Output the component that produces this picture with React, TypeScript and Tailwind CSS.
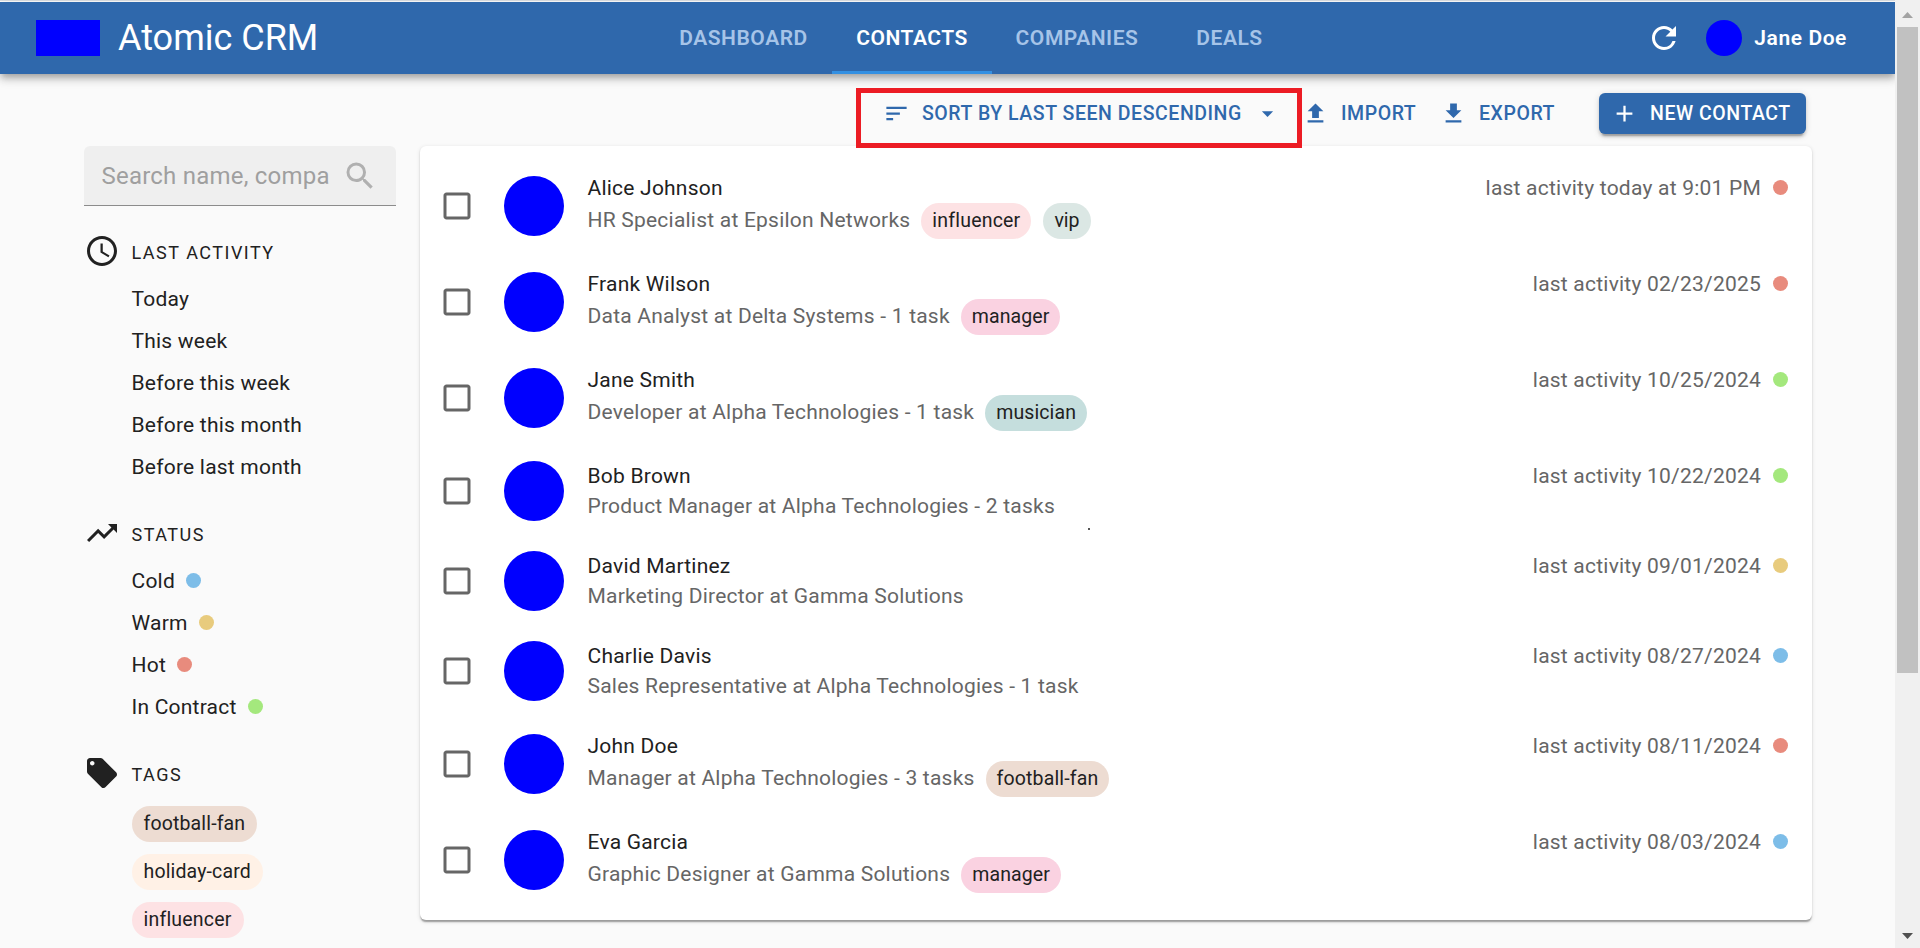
import type { ReactNode } from "react";
import {
  MdAccessTime,
  MdAdd,
  MdArrowDropDown,
  MdCheckBoxOutlineBlank,
  MdDownload,
  MdLocalOffer,
  MdRefresh,
  MdSearch,
  MdSort,
  MdTrendingUp,
  MdUpload,
} from "react-icons/md";

type Status = "cold" | "warm" | "hot" | "contract";

const statusColor: Record<Status, string> = {
  cold: "bg-[#7dbde8]",
  warm: "bg-[#e8cb7d]",
  hot: "bg-[#e88b7d]",
  contract: "bg-[#a4e87d]",
};

const tagStyle: Record<string, string> = {
  "football-fan": "bg-[#eddcd2] tracking-[0.15px]",
  "holiday-card": "bg-[#fff1e6] tracking-[0.15px]",
  influencer: "bg-[#fde2e4] tracking-[0.2px]",
  manager: "bg-[#fad2e1] tracking-[0.1px]",
  musician: "bg-[#c5dedd] tracking-[0.1px]",
  vip: "bg-[#dbe7e4] tracking-normal",
};

interface Contact {
  name: string;
  detail: string;
  activity: string;
  status: Status;
  tags: string[];
}

const contacts: Contact[] = [
  { name: "Alice Johnson", detail: "HR Specialist at Epsilon Networks", activity: "today at 9:01 PM", status: "hot", tags: ["influencer", "vip"] },
  { name: "Frank Wilson", detail: "Data Analyst at Delta Systems - 1 task", activity: "02/23/2025", status: "hot", tags: ["manager"] },
  { name: "Jane Smith", detail: "Developer at Alpha Technologies - 1 task", activity: "10/25/2024", status: "contract", tags: ["musician"] },
  { name: "Bob Brown", detail: "Product Manager at Alpha Technologies - 2 tasks", activity: "10/22/2024", status: "contract", tags: [] },
  { name: "David Martinez", detail: "Marketing Director at Gamma Solutions", activity: "09/01/2024", status: "warm", tags: [] },
  { name: "Charlie Davis", detail: "Sales Representative at Alpha Technologies - 1 task", activity: "08/27/2024", status: "cold", tags: [] },
  { name: "John Doe", detail: "Manager at Alpha Technologies - 3 tasks", activity: "08/11/2024", status: "hot", tags: ["football-fan"] },
  { name: "Eva Garcia", detail: "Graphic Designer at Gamma Solutions", activity: "08/03/2024", status: "cold", tags: ["manager"] },
];

const periods = ["Today", "This week", "Before this week", "Before this month", "Before last month"];

const statuses: { label: string; status: Status }[] = [
  { label: "Cold", status: "cold" },
  { label: "Warm", status: "warm" },
  { label: "Hot", status: "hot" },
  { label: "In Contract", status: "contract" },
];

function Dot({ status, className }: { status: Status; className: string }) {
  return <span className={`size-[15px] shrink-0 rounded-full ${className} ${statusColor[status]}`} />;
}

function Header() {
  const tab = "flex h-full items-center justify-center border-b-[3px] pt-[5px] text-[21px] font-semibold tracking-[0.53px]";
  return (
    <header className="relative z-10 flex h-[72px] items-center bg-[#2f68ac] text-white shadow-[0_3px_6px_-1.5px_rgba(0,0,0,0.2),0_6px_7.5px_rgba(0,0,0,0.14),0_1.5px_15px_rgba(0,0,0,0.12)]">
      <div className="flex w-[655px] items-center pl-9">
        <span className="h-9 w-16 bg-[#0000ff]" />
        <h1 className="ml-[18px] text-4xl leading-none">Atomic CRM</h1>
      </div>
      <nav className="flex h-full">
        <a className={`${tab} w-[177px] border-transparent text-[#a6c4e8]`}>DASHBOARD</a>
        <a className={`${tab} w-[160px] border-[#3490e2]`}>CONTACTS</a>
        <a className={`${tab} w-[170px] border-transparent text-[#a6c4e8]`}>COMPANIES</a>
        <a className={`${tab} w-[135px] border-transparent text-[#a6c4e8]`}>DEALS</a>
      </nav>
      <div className="ml-auto flex items-center pr-12">
        <MdRefresh className="size-9" />
        <span className="ml-6 size-9 rounded-full bg-[#0000ff]" />
        <span className="ml-3 pt-px text-[21px] font-semibold tracking-[0.58px]">Jane Doe</span>
      </div>
    </header>
  );
}

function Toolbar() {
  const text = "ml-3 text-[19.5px] font-medium tracking-[0.55px] leading-[27px]";
  return (
    <div className="flex h-[72px] items-start pl-[856px] text-[#2f68ac]">
      <div className="relative z-10 mt-[14px] flex h-[60px] w-[446px] shrink-0 items-start border-[5px] border-[#ec1c24] pl-[22px] pt-[7px]">
        <MdSort className="size-[27px]" />
        <span className={text}>SORT BY LAST SEEN DESCENDING</span>
        <MdArrowDropDown className="ml-auto mr-4 size-[27px]" />
      </div>
      <div className="mt-[26px] flex w-[138px] items-center">
        <MdUpload className="size-[27px]" />
        <span className={text}>IMPORT</span>
      </div>
      <div className="mt-[26px] flex w-[159px] items-center">
        <MdDownload className="size-[27px]" />
        <span className={text}>EXPORT</span>
      </div>
      <button className="mt-[19px] flex h-[41px] w-[207px] items-center rounded-md bg-[#2f68ac] pl-3 text-white shadow-[0_4.5px_1.5px_-3px_rgba(0,0,0,0.2),0_3px_3px_rgba(0,0,0,0.14),0_1.5px_7.5px_rgba(0,0,0,0.12)]">
        <MdAdd className="size-[27px]" />
        <span className={text}>NEW CONTACT</span>
      </button>
    </div>
  );
}

function Section({ icon, title, children }: { icon: ReactNode; title: string; children: ReactNode }) {
  return (
    <section className="mb-7">
      <div className="mb-2 flex h-9 items-center">
        {icon}
        <h2 className="ml-[11.5px] pt-[3px] text-[18px] tracking-[1.5px]">{title}</h2>
      </div>
      <div className="pl-[47.5px]">{children}</div>
    </section>
  );
}

function Sidebar() {
  const item = "flex h-[42px] items-center text-[21px] tracking-[0.22px]";
  return (
    <aside className="w-[312px] shrink-0 text-[#212121]">
      <div className="mb-[27px] flex h-[60px] items-center rounded-t-md border-b border-[#8c8c8c] bg-[#efefef] pl-[17.5px]">
        <span className="w-[228.5px] overflow-hidden whitespace-nowrap text-2xl tracking-[0.22px] text-[#9f9f9f]">Search name, compa</span>
        <MdSearch className="ml-3 size-9 shrink-0 text-[#b0b0b0]" />
      </div>
      <Section icon={<MdAccessTime className="size-9" />} title="LAST ACTIVITY">
        {periods.map((p) => (
          <div key={p} className={item}>
            <span className="pt-[3px]">{p}</span>
          </div>
        ))}
      </Section>
      <Section icon={<MdTrendingUp className="size-9" />} title="STATUS">
        {statuses.map((s) => (
          <div key={s.label} className={item}>
            <span className="pt-[3px]">{s.label}</span>
            <Dot status={s.status} className="ml-[11px] mt-px" />
          </div>
        ))}
      </Section>
      <Section icon={<MdLocalOffer className="size-9" />} title="TAGS">
        <div className="flex flex-col items-start gap-3 pt-[7px]">
          {["football-fan", "holiday-card", "influencer"].map((t) => (
            <span key={t} className={`flex h-9 items-center rounded-full px-3 text-[19.5px] ${tagStyle[t]}`}>{t}</span>
          ))}
        </div>
      </Section>
    </aside>
  );
}

function ContactRow({ contact }: { contact: Contact }) {
  const { name, detail, activity, status, tags } = contact;
  return (
    <li className="flex items-center py-[15px] pl-[19px] pr-6 text-[21px] leading-[30px] tracking-[0.22px]">
      <MdCheckBoxOutlineBlank className="size-9 text-[#666]" />
      <span className="ml-[29px] size-[60px] rounded-full bg-[#0000ff]" />
      <div className="ml-[23.5px] flex-1">
        <div className="text-[#212121]">{name}</div>
        <div className="flex items-center text-[#666]">
          <span className={tags.length > 0 ? "pb-[2px]" : ""}>{detail}</span>
          <div className="ml-[11px] flex gap-3">
            {tags.map((t) => (
              <span key={t} className={`flex h-9 items-center rounded-full px-[11px] text-[19.5px] text-[#212121] ${tagStyle[t]}`}>{t}</span>
            ))}
          </div>
        </div>
      </div>
      <div className="flex items-center self-start text-[#666]">
        last activity {activity}
        <Dot status={status} className="mb-px ml-3" />
      </div>
    </li>
  );
}

function Scrollbar() {
  return (
    <div className="flex w-[25px] shrink-0 flex-col items-center bg-[#f0f0f0]">
      <svg className="mt-3 h-[6px] w-[11px] shrink-0" viewBox="0 0 11 6">
        <path d="M5.5 0L11 6H0z" fill="#a3a3a3" />
      </svg>
      <div className="mt-[9px] h-[646px] w-[21px] bg-[#c1c1c1]" />
      <svg className="mb-[9px] mt-auto h-[6px] w-[11px] shrink-0" viewBox="0 0 11 6">
        <path d="M5.5 6L11 0H0z" fill="#505050" />
      </svg>
    </div>
  );
}

export default function App() {
  return (
    <div className="flex h-[948px] w-[1920px] overflow-hidden bg-[#fafafa] font-[Roboto,sans-serif]">
      <div className="relative w-[1895px] overflow-hidden">
        <div className="h-[2px] border-b border-white bg-[#dcdfe3]" />
        <Header />
        <Toolbar />
        <main className="flex items-start pl-[84px]">
          <Sidebar />
          <ul className="ml-6 w-[1392px] rounded-md bg-white py-3 shadow-[0_3px_1.5px_-1.5px_rgba(0,0,0,0.2),0_1.5px_1.5px_rgba(0,0,0,0.14),0_1.5px_4.5px_rgba(0,0,0,0.12)]">
            {contacts.map((c) => (
              <ContactRow key={c.name} contact={c} />
            ))}
          </ul>
        </main>
        <span className="absolute left-[1088px] top-[528px] size-[2px] bg-[#555]" />
      </div>
      <Scrollbar />
    </div>
  );
}
